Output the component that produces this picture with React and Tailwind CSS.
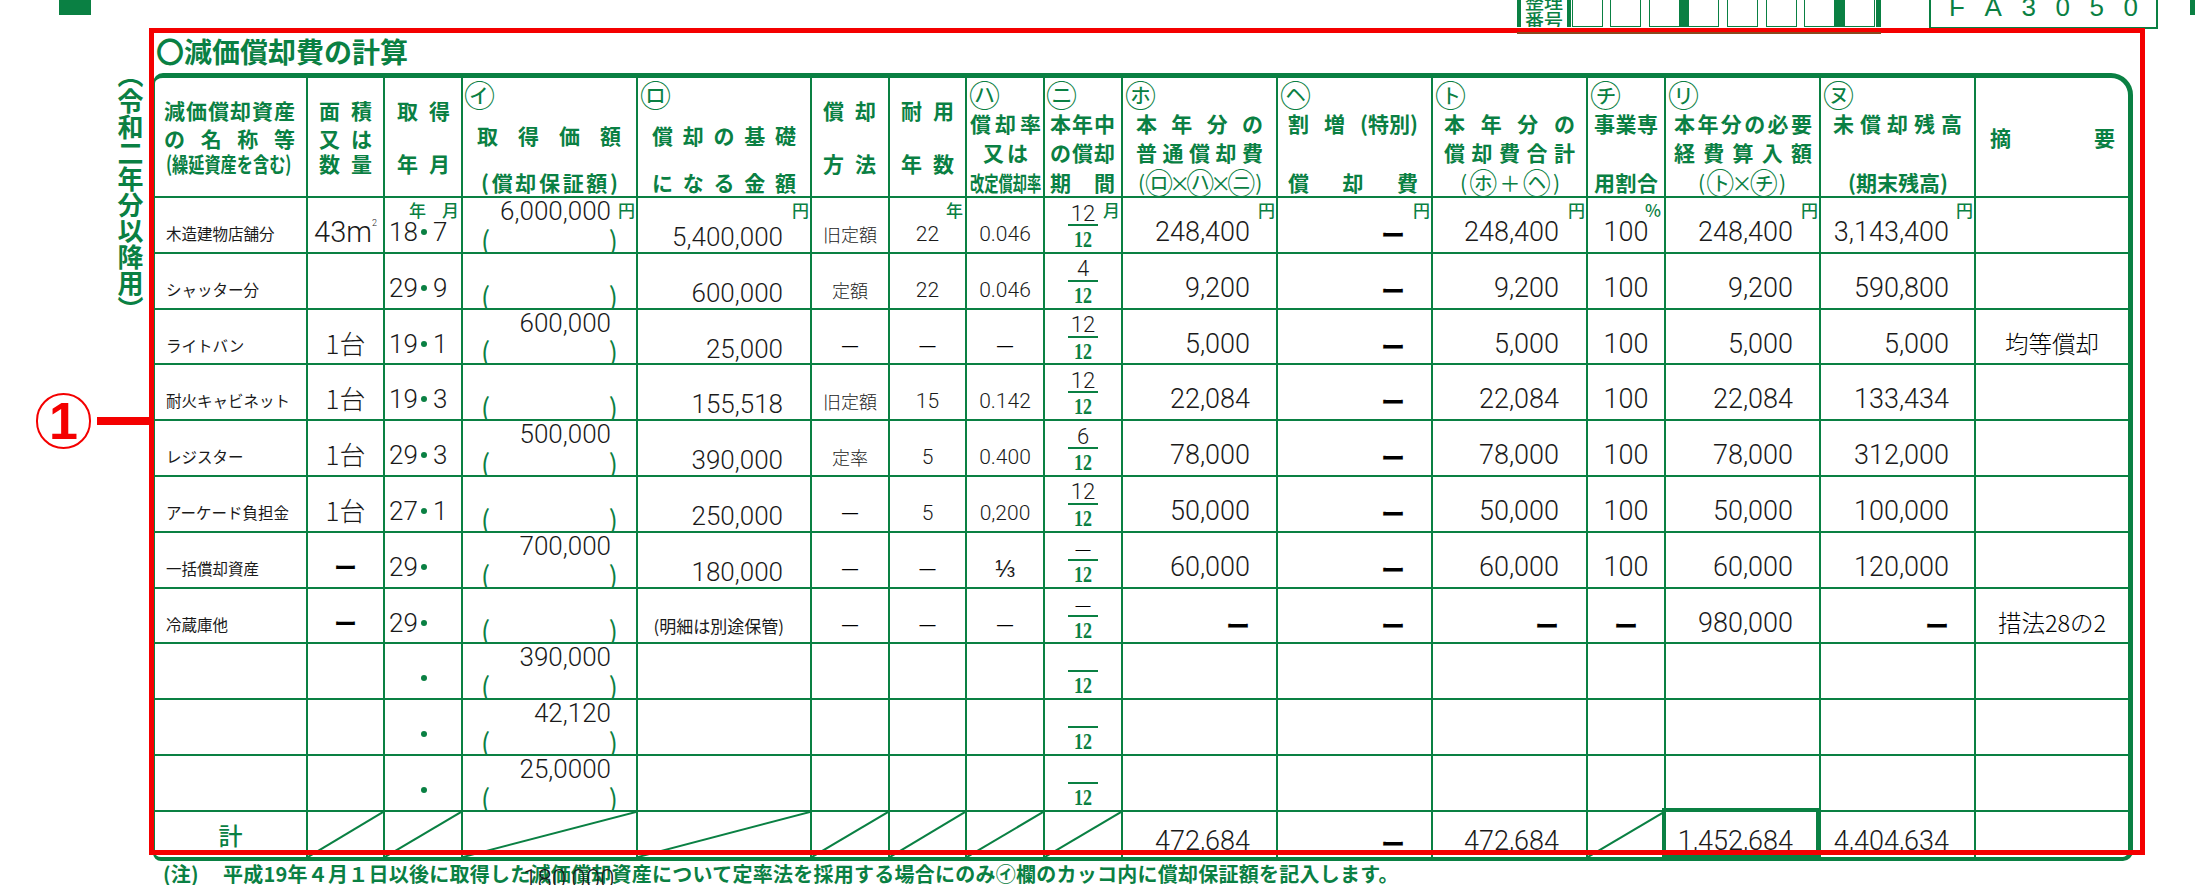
import React from "react";

const JP = "font-['Noto_Sans_CJK_JP',sans-serif]";
const NUM = "font-['Roboto','Liberation_Sans','Noto_Sans_CJK_JP',sans-serif] font-light text-[#1a1a1a]";
const G = "text-[#0a8043]";
const C = "relative border-r-2 border-b-2 border-[#0a8043]";
const C2 = "relative border-r-2 border-[#0a8043]";

const rows = [
  { name: "木造建物店舗分", area: "43", date: ["18", "7"], cost: "6,000,000", base: "5,400,000", method: "旧定額", life: "22", rate: "0.046", num: "12", ord: "248,400", inc: "ー", total: "248,400", pct: "100", need: "248,400", rest: "3,143,400", note: "" },
  { name: "シャッター分", area: "", date: ["29", "9"], cost: "", base: "600,000", method: "定額", life: "22", rate: "0.046", num: "4", ord: "9,200", inc: "ー", total: "9,200", pct: "100", need: "9,200", rest: "590,800", note: "" },
  { name: "ライトバン", area: "1台", date: ["19", "1"], cost: "600,000", base: "25,000", method: "—", life: "—", rate: "—", num: "12", ord: "5,000", inc: "ー", total: "5,000", pct: "100", need: "5,000", rest: "5,000", note: "均等償却" },
  { name: "耐火キャビネット", area: "1台", date: ["19", "3"], cost: "", base: "155,518", method: "旧定額", life: "15", rate: "0.142", num: "12", ord: "22,084", inc: "ー", total: "22,084", pct: "100", need: "22,084", rest: "133,434", note: "" },
  { name: "レジスター", area: "1台", date: ["29", "3"], cost: "500,000", base: "390,000", method: "定率", life: "5", rate: "0.400", num: "6", ord: "78,000", inc: "ー", total: "78,000", pct: "100", need: "78,000", rest: "312,000", note: "" },
  { name: "アーケード負担金", area: "1台", date: ["27", "1"], cost: "", base: "250,000", method: "—", life: "5", rate: "0,200", num: "12", ord: "50,000", inc: "ー", total: "50,000", pct: "100", need: "50,000", rest: "100,000", note: "" },
  { name: "一括償却資産", area: "ー", date: ["29", ""], cost: "700,000", base: "180,000", method: "—", life: "—", rate: "⅓", num: "—", ord: "60,000", inc: "ー", total: "60,000", pct: "100", need: "60,000", rest: "120,000", note: "" },
  { name: "冷蔵庫他", area: "ー", date: ["29", ""], cost: "", base: "(明細は別途保管)", method: "—", life: "—", rate: "—", num: "—", ord: "ー", inc: "ー", total: "ー", pct: "ー", need: "980,000", rest: "ー", note: "措法28の2" },
  { name: "", area: "", date: ["", ""], cost: "390,000", base: "", method: "", life: "", rate: "", num: "", ord: "", inc: "", total: "", pct: "", need: "", rest: "", note: "" },
  { name: "", area: "", date: ["", ""], cost: "42,120", base: "", method: "", life: "", rate: "", num: "", ord: "", inc: "", total: "", pct: "", need: "", rest: "", note: "" },
  { name: "", area: "", date: ["", ""], cost: "25,0000", base: "", method: "", life: "", rate: "", num: "", ord: "", inc: "", total: "", pct: "", need: "", rest: "", note: "" },
];

const CIRCLED = "㋑㋺㋩㋥㋭㋬㋣㋠㋷㋦";

function L({ t, className = "" }) {
  const parts = Array.isArray(t) ? t : [...t];
  return (
    <div className={`flex justify-between h-5 items-center leading-none whitespace-nowrap text-[21px] font-bold ${className}`}>
      {parts.map((c, i) => (
        <span key={i} className={CIRCLED.includes(c) ? "text-[28px] font-normal" : c === "×" ? "-mx-[4px]" : ""}>{c}</span>
      ))}
    </div>
  );
}

function Mark({ t, className = "" }) {
  return <div className={`h-[22px] text-[31px] leading-[22px] font-normal ${className}`}>{t}</div>;
}

function Hd({ children, className = "" }) {
  return <div className={`${C} ${G} ${JP} flex flex-col overflow-hidden ${className}`}>{children}</div>;
}

function Unit({ t, className = "" }) {
  return (
    <span className={`absolute top-[3px] text-[17px] leading-none font-medium ${G} ${JP} ${className}`}>{t}</span>
  );
}

function Val({ v }) {
  if (!v) return null;
  if (v === "ー")
    return <span className={`${JP} text-[24px] leading-none font-semibold text-black mt-[3px]`}>ー</span>;
  return <span className={`${NUM} text-[27px] leading-none`}>{v}</span>;
}

function Diag({ className = "" }) {
  return (
    <div className={`${C2} ${className}`}>
      <svg viewBox="0 0 100 100" preserveAspectRatio="none" className="absolute inset-0 w-full h-full">
        <line x1="0" y1="100" x2="100" y2="0" stroke="#0a8043" strokeWidth="2" vectorEffect="non-scaling-stroke" />
      </svg>
    </div>
  );
}

function Small({ v }) {
  if (!v) return null;
  if (v === "—") return <span className="font-['Liberation_Sans',sans-serif] text-[16px] leading-[20px] text-black">—</span>;
  if (v === "⅓") return <span className="font-['Liberation_Sans',sans-serif] text-[24px] leading-[20px] text-[#1a1a1a]">⅓</span>;
  return <span className={`${NUM} text-[21px] leading-[20px]`}>{v}</span>;
}

function Row({ r, i }) {
  const first = i === 0;
  return (
    <>
      <div className={`${C} ${JP} text-[15.5px] leading-none text-[#1a1a1a] pl-[11px] pt-[28px] whitespace-nowrap`}>{r.name}</div>
      <div className={`${C} flex justify-center pt-[20px]`}>
        {r.area === "43" ? (
          <span className={`${NUM} text-[29px] leading-none whitespace-nowrap`}>
            43m<span className="text-[9px] align-[16px]">2</span>
          </span>
        ) : r.area === "1台" ? (
          <span className={`${JP} font-light text-[#1a1a1a] text-[26px] leading-none`}>1台</span>
        ) : r.area === "ー" ? (
          <span className={`${JP} text-[23px] leading-none font-semibold text-black mt-[2px]`}>ー</span>
        ) : null}
      </div>
      <div className={`${C} flex items-start pl-[4px] pt-[21px]`}>
        <span className={`${NUM} text-[26px] leading-none w-[32px]`}>{r.date[0]}</span>
        {(r.date[0] || i > 7) && <span className="w-[6px] h-[6px] rounded-full bg-[#0a8043] mt-[10px] shrink-0" />}
        <span className={`${NUM} text-[26px] leading-none ml-[6px]`}>{r.date[1]}</span>
        {first && (
          <span className={`absolute right-[2px] top-[3px] flex gap-[16px] text-[17px] leading-none font-medium ${G} ${JP}`}>
            <span>年</span>
            <span>月</span>
          </span>
        )}
      </div>
      <div className={`${C} flex flex-col justify-between overflow-hidden`}>
        <div className={`${NUM} h-[26px] text-[26px] leading-none text-right pr-[25px]`}>{r.cost}</div>
        <div className={`flex justify-between px-[18px] ${JP} font-normal text-[27px] leading-[24px] ${G}`}>
          <span>(</span>
          <span>)</span>
        </div>
        {first && <Unit t="円" className="right-px" />}
      </div>
      <div className={`${C} flex justify-end items-start pr-[27px] pt-[26px]`}>
        {r.base.startsWith("(") ? (
          <span className={`${JP} text-[17px] leading-none font-normal text-[#1a1a1a] whitespace-nowrap -mr-[1px] mt-[2px]`}>{r.base}</span>
        ) : (
          <span className={`${NUM} text-[26px] leading-none`}>{r.base}</span>
        )}
        {first && <Unit t="円" className="right-px" />}
      </div>
      <div className={`${C} flex justify-center items-start pt-[26px]`}>
        {r.method === "—" ? <Small v="—" /> : <span className={`${JP} text-[18px] leading-[20px] font-light text-[#1a1a1a]`}>{r.method}</span>}
      </div>
      <div className={`${C} flex justify-center items-start pt-[26px]`}>
        <Small v={r.life} />
        {first && <Unit t="年" className="right-[2px]" />}
      </div>
      <div className={`${C} flex justify-center items-start pt-[26px]`}>
        <Small v={r.rate} />
      </div>
      <div className={`${C} flex flex-col items-center pt-[5px]`}>
        <div className={`h-[21px] flex items-center justify-center ${r.num === "—" ? "font-['Liberation_Sans',sans-serif] text-[15px] text-black" : NUM + " text-[22px]"} leading-none`}>
          {r.num}
        </div>
        <div className="w-[30px] h-[2px] bg-[#0a8043]" />
        <div className={`font-['Liberation_Serif',serif] font-bold text-[24px] leading-[20px] mt-[3px] scale-x-[0.75] ${G}`}>12</div>
        {first && <Unit t="月" className="right-px" />}
      </div>
      <div className={`${C} flex justify-end items-start pr-[26px] pt-[21px]`}>
        <Val v={r.ord} />
        {first && <Unit t="円" className="right-px" />}
      </div>
      <div className={`${C} flex justify-end items-start pr-[26px] pt-[21px]`}>
        <Val v={r.inc} />
        {first && <Unit t="円" className="right-px" />}
      </div>
      <div className={`${C} flex justify-end items-start pr-[27px] pt-[21px]`}>
        <Val v={r.total} />
        {first && <Unit t="円" className="right-px" />}
      </div>
      <div className={`${C} flex justify-center items-start pt-[21px]`}>
        <Val v={r.pct} />
        {first && <Unit t="%" className="right-[3px] font-bold" />}
      </div>
      <div className={`${C} flex justify-end items-start pr-[26px] pt-[21px]`}>
        <Val v={r.need} />
        {first && <Unit t="円" className="right-px" />}
      </div>
      <div className={`${C} flex justify-end items-start pr-[25px] pt-[21px]`}>
        <Val v={r.rest} />
        {first && <Unit t="円" className="right-px" />}
      </div>
      <div className={`relative border-b-2 border-[#0a8043] flex justify-center items-start pt-[22px] ${JP} font-light text-black text-[23.5px] leading-none whitespace-nowrap`}>
        {r.note}
      </div>
    </>
  );
}

function NumBox() {
  return <div className="w-[31px] h-[27px] border-x-[1.5px] border-b-[1.5px] border-[#0a8043]" />;
}

export default function App() {
  return (
    <div className="relative w-[2195px] h-[885px] overflow-hidden bg-white">
      {/* top strip */}
      <div className="flex items-start h-[29px] overflow-hidden">
        <div className="ml-[59px] w-[32px] h-[15px] bg-[#0a8043]" />
        <div className={`ml-[1426px] w-[54px] h-[27px] border-x-4 border-[#0a8043] flex flex-col justify-end items-center overflow-hidden ${G} ${JP} text-[19px] leading-[19px] font-medium shrink-0`}>
          <div className="shrink-0">整理</div>
          <div className="shrink-0 -mb-[2px]">番号</div>
        </div>
        <div className="flex ml-px">
          <NumBox />
          <div className="w-[7px]" />
          <NumBox />
          <div className="w-[8px]" />
          <NumBox />
          <div className="w-[8px] h-[27px] bg-[#0a8043]" />
          <NumBox />
          <div className="w-[8px]" />
          <NumBox />
          <div className="w-[8px]" />
          <NumBox />
          <div className="w-[7px]" />
          <NumBox />
          <div className="w-[9px] h-[27px] bg-[#0a8043]" />
          <NumBox />
          <div className="w-px" />
          <div className="w-[5px] h-[27px] bg-[#0a8043]" />
        </div>
        <div className={`ml-[48px] w-[229px] h-[29px] border-x-2 border-b-2 border-[#0a8043] overflow-hidden flex justify-between pl-[18px] pr-[18px] font-['Liberation_Sans',sans-serif] text-[26px] leading-none ${G}`}>
          {["F", "A", "3", "0", "5", "0"].map((c, i) => (
            <span key={i} className="-mt-[6px]">{c}</span>
          ))}
        </div>
        <div className="ml-[32px] w-[5px] h-[15px] bg-[#0a8043]" />
      </div>

      <div className="flex">
        {/* side label */}
        <div className="w-[153px] shrink-0 flex justify-end pr-[9px] pt-[33px]">
          <div className={`[writing-mode:vertical-rl] ${JP} ${G} font-bold text-[26px] leading-[28px] whitespace-nowrap`}>（令和二年分以降用）</div>
        </div>

        <div className="w-[1980px] shrink-0">
          <div className={`h-[44px] pl-[3px] pt-[5px] ${JP} ${G} font-bold text-[28px] leading-[34px] whitespace-nowrap`}>〇減価償却費の計算</div>

          <div className="border-[#0a8043] border-l-2 border-t-[5px] border-r-[5px] border-b-[4px] rounded-tl-[10px] rounded-tr-[22px] rounded-bl-[8px] rounded-br-[10px] grid grid-cols-[153px_77px_78px_175px_174px_78px_77px_78px_78px_155px_155px_155px_78px_155px_155px_152px] grid-rows-[120px_repeat(11,55.8px)_45px]">
            {/* header */}
            <Hd className="pt-[22px]">
              <L t="減価償却資産" className="ml-[9px] w-[131px]" />
              <L t="の名称等" className="ml-[9px] w-[131px] mt-[8px]" />
              <div className="ml-[11px] h-5 mt-[5px] text-[21px] leading-5 font-bold whitespace-nowrap origin-left scale-x-[0.77]">(繰延資産を含む)</div>
            </Hd>
            <Hd className="pt-[22px]">
              <L t="面積" className="ml-[11px] w-[53px]" />
              <L t="又は" className="ml-[11px] w-[53px] mt-[8px]" />
              <L t="数量" className="ml-[11px] w-[53px] mt-[5px]" />
            </Hd>
            <Hd className="pt-[22px]">
              <L t="取得" className="ml-[12px] w-[53px]" />
              <L t="年月" className="ml-[12px] w-[53px] mt-[33px]" />
            </Hd>
            <Hd className="pt-[5px]">
              <Mark t="㋑" className="ml-[1px]" />
              <L t="取得価額" className="ml-[14px] w-[144px] mt-[20px]" />
              <L t="(償却保証額)" className="ml-[18px] w-[137px] mt-[27px]" />
            </Hd>
            <Hd className="pt-[5px]">
              <Mark t="㋺" className="ml-[2px]" />
              <L t="償却の基礎" className="ml-[14px] w-[144px] mt-[20px]" />
              <L t="になる金額" className="ml-[14px] w-[144px] mt-[27px]" />
            </Hd>
            <Hd className="pt-[22px]">
              <L t="償却" className="ml-[11px] w-[53px]" />
              <L t="方法" className="ml-[11px] w-[53px] mt-[33px]" />
            </Hd>
            <Hd className="pt-[22px]">
              <L t="耐用" className="ml-[11px] w-[53px]" />
              <L t="年数" className="ml-[11px] w-[53px] mt-[33px]" />
            </Hd>
            <Hd className="pt-[5px]">
              <Mark t="㋩" className="ml-[2px]" />
              <L t="償却率" className="ml-[3px] w-[71px] mt-[8px]" />
              <L t="又は" className="ml-[16px] w-[45px] mt-[9px]" />
              <div className="ml-[3px] h-5 mt-[10px] text-[21px] leading-5 font-bold whitespace-nowrap origin-left scale-x-[0.68]">改定償却率</div>
            </Hd>
            <Hd className="pt-[5px]">
              <Mark t="㋥" className="ml-[1px]" />
              <L t="本年中" className="ml-[5px] w-[65px] mt-[8px]" />
              <L t="の償却" className="ml-[5px] w-[65px] mt-[9px]" />
              <L t="期間" className="ml-[5px] w-[65px] mt-[10px]" />
            </Hd>
            <Hd className="pt-[5px]">
              <Mark t="㋭" className="ml-[2px]" />
              <L t="本年分の" className="ml-[13px] w-[127px] mt-[8px]" />
              <L t="普通償却費" className="ml-[13px] w-[127px] mt-[9px]" />
              <L t="(㋺×㋩×㋥)" className="ml-[15px] w-[122px] mt-[10px] font-normal" />
            </Hd>
            <Hd className="pt-[5px]">
              <Mark t="㋬" className="ml-[2px]" />
              <L t={["割", "増", "(特別)"]} className="ml-[10px] w-[130px] mt-[8px]" />
              <L t="償却費" className="ml-[10px] w-[130px] mt-[39px]" />
            </Hd>
            <Hd className="pt-[5px]">
              <Mark t="㋣" className="ml-[2px]" />
              <L t="本年分の" className="ml-[11px] w-[131px] mt-[8px]" />
              <L t="償却費合計" className="ml-[11px] w-[131px] mt-[9px]" />
              <L t="(㋭＋㋬)" className="ml-[27px] w-[100px] mt-[10px] font-normal" />
            </Hd>
            <Hd className="pt-[5px]">
              <Mark t="㋠" className="ml-[2px]" />
              <L t="事業専" className="ml-[6px] w-[64px] mt-[8px]" />
              <L t="用割合" className="ml-[6px] w-[64px] mt-[39px]" />
            </Hd>
            <Hd className="pt-[5px]">
              <Mark t="㋷" className="ml-[2px]" />
              <L t="本年分の必要" className="ml-[8px] w-[138px] mt-[8px]" />
              <L t="経費算入額" className="ml-[8px] w-[138px] mt-[9px]" />
              <L t="(㋣×㋠)" className="ml-[32px] w-[88px] mt-[10px] font-normal" />
            </Hd>
            <Hd className="pt-[5px]">
              <Mark t="㋦" className="ml-[2px]" />
              <L t="未償却残高" className="ml-[12px] w-[129px] mt-[8px]" />
              <L t="(期末残高)" className="ml-[27px] w-[100px] mt-[39px]" />
            </Hd>
            <div className={`relative border-b-2 border-[#0a8043] pt-[49px] ${G} ${JP}`}>
              <L t="摘要" className="ml-[14px] w-[125px]" />
            </div>

            {rows.map((r, i) => (
              <Row key={i} r={r} i={i} />
            ))}

            {/* total row */}
            <div className={`${C2} flex justify-center pt-[11px] ${JP} ${G} text-[24px] font-medium leading-none`}>計</div>
            <Diag />
            <Diag />
            <Diag />
            <Diag />
            <Diag />
            <Diag />
            <Diag />
            <Diag />
            <div className={`${C2} flex justify-end items-start pr-[26px] pt-[16px]`}><Val v="472,684" /></div>
            <div className={`${C2} flex justify-end items-start pr-[26px] pt-[16px]`}><Val v="ー" /></div>
            <div className={`${C2} flex justify-end items-start pr-[27px] pt-[16px]`}><Val v="472,684" /></div>
            <Diag />
            <div className={`${C2} flex justify-end items-start pr-[26px] pt-[16px]`}>
              <Val v="1,452,684" />
              <div className="absolute -top-[4px] -left-[4px] -right-[1px] bottom-0 border-[4px] border-[#0a8043]" />
            </div>
            <div className={`${C2} flex justify-end items-start pr-[25px] pt-[16px]`}><Val v="4,404,634" /></div>
            <div />
          </div>
        </div>
      </div>

      {/* footnote */}
      <div className={`flex pl-[163px] mt-[2px] h-[22px] ${JP} ${G} font-bold text-[20px] leading-[22px] tracking-[0.25px] whitespace-nowrap`}>
        <span className="w-[60px]">(注)</span>
        <span>平成19年４月１日以後に取得した減価償却資産について定率法を採用する場合にのみ㋑欄のカッコ内に償却保証額を記入します。</span>
      </div>

      {/* overlays */}
      <div className={`absolute left-[523px] top-[866px] w-[88px] text-right ${NUM} text-[26px] leading-none`}>180,000</div>
      <div className="absolute left-[149px] top-[28px] w-[1996px] h-[827px] border-[5px] border-[#f40000]" />
      <div className="absolute left-[1517px] top-[32px] w-[364px] h-[2px] bg-[#8a4a20]" />
      <div className="absolute left-[36px] top-[393px] w-[55px] h-[56px] rounded-full border-2 border-[#f40000] flex items-center justify-center font-['Liberation_Sans',sans-serif] font-bold text-[52px] leading-none text-[#f40000]">1</div>
      <div className="absolute left-[97px] top-[417px] w-[52px] h-[8px] bg-[#f40000]" />
    </div>
  );
}
